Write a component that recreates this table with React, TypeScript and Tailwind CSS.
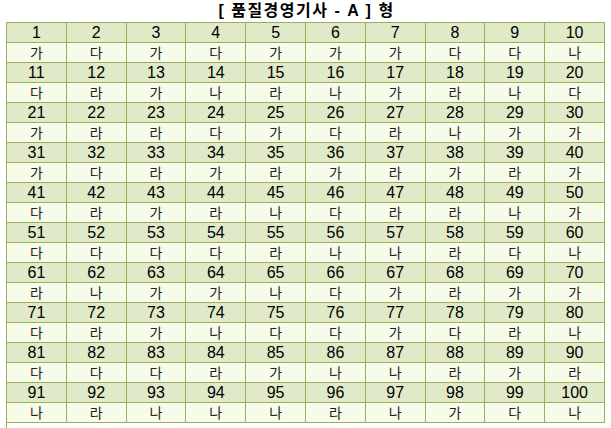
const answers = [
  '가다가다가가가다다나',
  '다라가나라나가라나다',
  '가라라다가다라나가가',
  '가다라가라가라가라가',
  '다라가라나다라라나가',
  '다다다다라나나라다나',
  '라나가가나다가라가가',
  '다라가나다다가다라나',
  '다다다라가나나라가라',
  '나라나나나라나가다나',
];

export default function App() {
  return (
    <div className="w-[611px] h-[428px] bg-white overflow-hidden font-['Liberation_Sans','Noto_Sans_CJK_KR',sans-serif]">
      {/* Title */}
      <div className="h-[22px] pl-[2px] flex items-center justify-center text-[16px] font-bold text-black tracking-[1.5px] whitespace-pre">
        [ 품질경영기사 - A ] 형
      </div>

      {/* Answer grid */}
      <div className="ml-[6px] w-[599px] grid grid-cols-10 border-l border-t border-[#9bb05c]">
        {answers.map((row, r) => (
          <div key={r} className="contents">
            {Array.from({ length: 10 }).map((_, c) => (
              <div
                key={'n' + c}
                className="h-[20px] flex items-center justify-center border-r border-b border-[#9bb05c] bg-[#e0eac8] text-[16px] text-black leading-none"
              >
                {r * 10 + c + 1}
              </div>
            ))}
            {row.split('').map((a, c) => (
              <div
                key={'a' + c}
                className="h-[20px] flex items-center justify-center border-r border-b border-[#9bb05c] bg-[#f7fbea] text-[14px] text-[#222] leading-none"
              >
                {a}
              </div>
            ))}
          </div>
        ))}
      </div>
      <div className="ml-[6px] h-[8px] border-l border-[#9bb05c]" />
    </div>
  );
}
